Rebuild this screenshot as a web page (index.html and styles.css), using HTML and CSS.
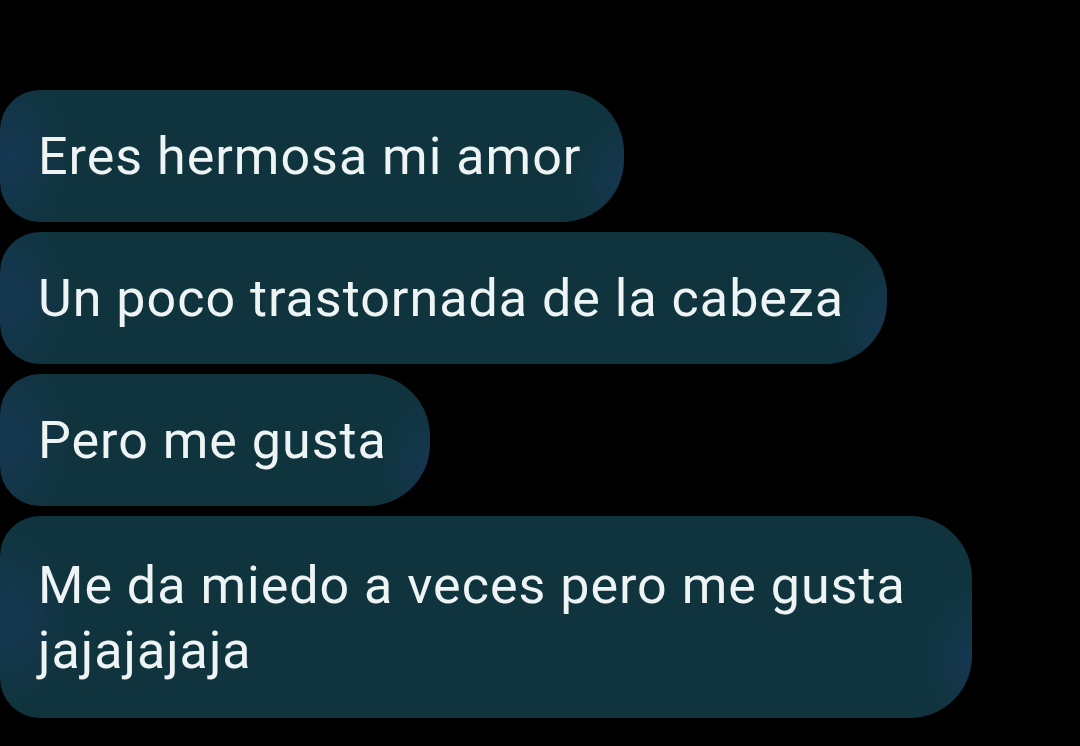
FILE: index.html
```html
<!DOCTYPE html>
<html lang="es">
<head>
<meta charset="utf-8">
<title>Chat</title>
<link rel="stylesheet" href="styles.css">
</head>
<body>
<main class="chat">
  <div class="bubble">Eres hermosa mi amor</div>
  <div class="bubble">Un poco trastornada de la cabeza</div>
  <div class="bubble">Pero me gusta</div>
  <div class="bubble bubble-wide">Me da miedo a veces pero me gusta jajajajaja</div>
</main>
</body>
</html>
```
FILE: styles.css
```css
html, body {
  margin: 0;
  padding: 0;
  background: #000;
  height: 100%;
}
body {
  width: 1080px;
  height: 746px;
  overflow: hidden;
}
.chat {
  display: flex;
  flex-direction: column;
  align-items: flex-start;
  gap: 10px;
  padding-top: 90px;
}
.bubble {
  box-sizing: border-box;
  background-color: #10343e;
  background-image:
    radial-gradient(ellipse 60px 90px at 10px 50%, rgba(30, 60, 110, 0.45), rgba(30, 60, 110, 0) 100%),
    radial-gradient(ellipse 50px 70px at 100% 70%, rgba(30, 60, 120, 0.35), rgba(30, 60, 120, 0) 100%);
  color: #eef3f4;
  font-family: Roboto, "Liberation Sans", sans-serif;
  font-size: 52px;
  letter-spacing: 1px;
  line-height: 65px;
  padding: 34px 43px 33px 38px;
  border-radius: 40px 62px 62px 40px;
}
.bubble-wide {
  max-width: 972px;
  padding-top: 37px;
  padding-bottom: 35px;
}
```
